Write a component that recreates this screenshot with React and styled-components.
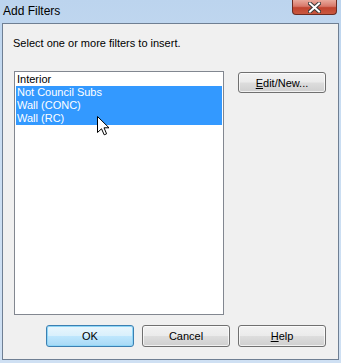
import React from "react";
import styled, { createGlobalStyle, css } from "styled-components";

const Global = createGlobalStyle`
  html, body { margin: 0; padding: 0; background: #c6dbf1; }
  body { font-family: "Liberation Sans", Arial, sans-serif; }
`;

const Window = styled.div`
  position: relative;
  width: 341px;
  height: 363px;
  display: flex;
  flex-direction: column;
  box-sizing: border-box;
  padding: 0 2px 3px 2px;
  background: linear-gradient(180deg, #bcd4ee 0%, #c9ddf2 30%, #cfe0f3 100%);
  overflow: hidden;
`;

const TitleBar = styled.div`
  height: 23px;
  display: flex;
  align-items: flex-start;
  justify-content: space-between;
  flex: none;
`;

const Title = styled.div`
  font-size: 12px;
  color: #000;
  padding: 4px 0 0 1px;
  line-height: 15px;
`;

const CloseButton = styled.div`
  width: 45px;
  height: 15px;
  margin-right: 2px;
  box-sizing: border-box;
  border: 1px solid #6b2b22;
  border-top: none;
  border-radius: 0 0 4px 4px;
  background: linear-gradient(180deg, #e9a99c 0%, #d8786a 45%, #c1432f 55%, #c9583f 100%);
  display: flex;
  align-items: center;
  justify-content: center;
`;

const Client = styled.div`
  flex: 1;
  background: #f0f0f0;
  border: 1px solid #6f7f93;
  display: flex;
  flex-direction: column;
  padding: 12px 12px 12px 11px;
`;

const Prompt = styled.div`
  font-size: 11px;
  line-height: 15px;
  color: #000;
  margin-left: -1px;
`;

const MainRow = styled.div`
  display: flex;
  margin-top: 20px;
  gap: 14px;
`;

const ListBox = styled.div`
  width: 210px;
  height: 244px;
  box-sizing: border-box;
  background: #fff;
  border: 1px solid #828790;
  padding: 1px;
`;

const Row = styled.div`
  height: 13px;
  line-height: 13px;
  font-size: 11px;
  padding-left: 1px;
  color: #000;
  white-space: nowrap;
  ${(p) =>
    p.$selected &&
    css`
      background: #3399ff;
      color: #fff;
    `}
`;

const Side = styled.div`
  padding-top: 1px;
`;

const Button = styled.div`
  width: 88px;
  height: ${(p) => (p.$h ? p.$h : 21)}px;
  box-sizing: border-box;
  border: 1px solid #707070;
  border-radius: 3px;
  background: linear-gradient(180deg, #f2f2f2 0%, #ebebeb 48%, #dddddd 52%, #cfcfcf 100%);
  box-shadow: inset 0 0 0 1px rgba(255, 255, 255, 0.7);
  font-size: 11px;
  color: #000;
  display: flex;
  align-items: center;
  justify-content: center;
  ${(p) =>
    p.$default &&
    css`
      border-color: #3c7fb1;
      background: linear-gradient(180deg, #eaf6fd 0%, #d9f0fc 48%, #bee6fd 52%, #a7d9f5 100%);
      box-shadow: inset 0 0 0 1px #8fd6f7;
    `}
`;

const U = styled.span`
  text-decoration: underline;
`;

const Footer = styled.div`
  display: flex;
  justify-content: flex-end;
  gap: 8px;
  margin-top: 10px;
`;

const Cursor = styled.svg`
  position: absolute;
  left: 97px;
  top: 116px;
`;

export default function App() {
  return (
    <>
      <Global />
      <Window>
        <TitleBar>
          <Title>Add Filters</Title>
          <CloseButton>
            <svg width="13" height="11" viewBox="0 0 13 11">
              <path
                d="M2 1.5 L11 9.5 M11 1.5 L2 9.5"
                stroke="#3a3a3a"
                strokeWidth="4"
                strokeLinecap="square"
              />
              <path
                d="M2 1.5 L11 9.5 M11 1.5 L2 9.5"
                stroke="#ffffff"
                strokeWidth="2"
                strokeLinecap="square"
              />
            </svg>
          </CloseButton>
        </TitleBar>
        <Client>
          <Prompt>Select one or more filters to insert.</Prompt>
          <MainRow>
            <ListBox>
              <Row>Interior</Row>
              <Row $selected>Not Council Subs</Row>
              <Row $selected>Wall (CONC)</Row>
              <Row $selected>Wall (RC)</Row>
            </ListBox>
            <Side>
              <Button>
                <U>E</U>dit/New...
              </Button>
            </Side>
          </MainRow>
          <Footer>
            <Button $h={22} $default>OK</Button>
            <Button $h={22}>Cancel</Button>
            <Button $h={22}>
              <U>H</U>elp
            </Button>
          </Footer>
        </Client>
        <Cursor width="13" height="20" viewBox="0 0 13 20">
          <path
            d="M0.5 0.5 L0.5 16.5 L4.5 12.8 L7.2 18.8 L9.6 17.8 L7 11.8 L12 11.8 Z"
            fill="#fff"
            stroke="#000"
            strokeWidth="1"
            strokeLinejoin="miter"
          />
        </Cursor>
      </Window>
    </>
  );
}
